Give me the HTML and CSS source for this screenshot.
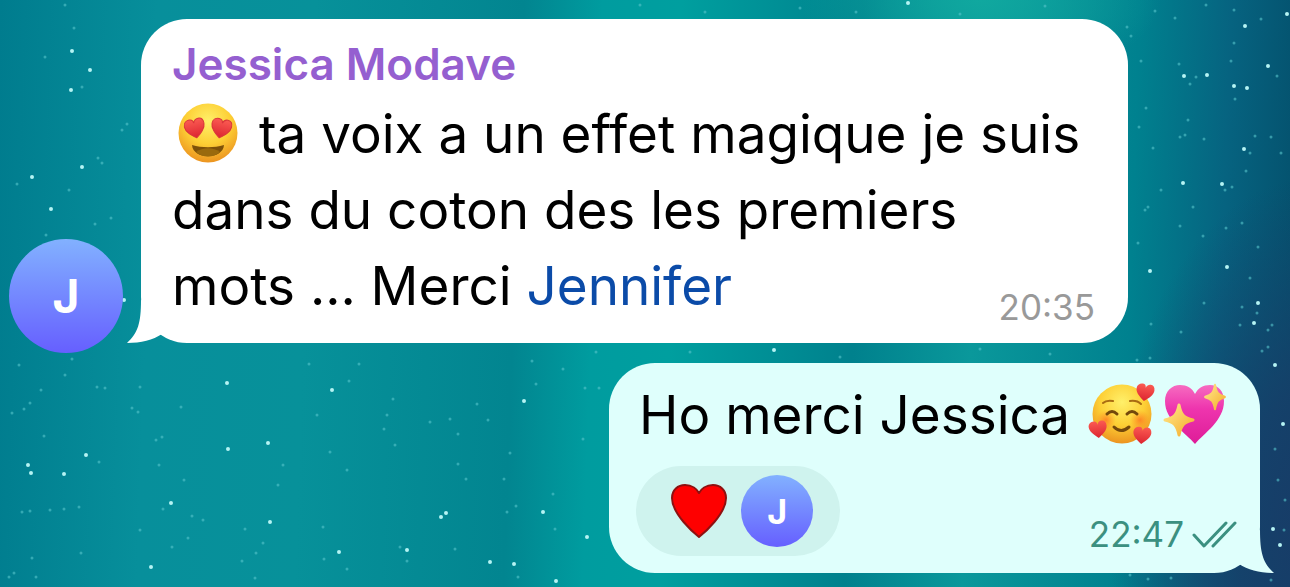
FILE: index.html
```
<!DOCTYPE html>
<html lang="fr">

<head>
    <meta charset="UTF-8">
    <meta name="viewport" content="width=device-width, initial-scale=1.0">
    <title>Conversation</title>
    <link rel="stylesheet" href="styles.css">
</head>

<body>
    <!-- ciel étoilé -->
    <svg class="stars" viewBox="0 0 1290 587" preserveAspectRatio="xMidYMid slice" aria-hidden="true">
        <path class="stars-bright" d="M72 51h0M90 70h0M71 90h0M32 177h0M82 167h0M51 209h0M124 300h0M28 465h0M31 473h0M64 474h0M86 455h0M268 443h0M228 449h0M270 522h0M227 383h0M171 503h0M151 567h0M524 401h0M446 513h0M441 517h0M543 512h0M490 562h0M514 564h0M556 581h0M332 390h0M339 552h0M407 550h0M587 537h0M1184 76h0M1268 66h0M1247 88h0M1234 86h0M1245 26h0M1287 14h0M1183 183h0M1244 149h0M1222 184h0M1150 271h0M1227 267h0M1258 303h0M1254 323h0M1275 365h0M1207 75h0M908 3h0M774 350h0M1283 424h0M1273 529h0M1280 545h0"/>
        <path class="stars-faint" d="M65 5h0M74 28h0M45 57h0M82 87h0M127 124h0M122 130h0M98 158h0M102 163h0M17 184h0M69 190h0M111 218h0M95 224h0M46 235h0M19 365h0M72 359h0M65 375h0M41 390h0M30 403h0M24 409h0M12 413h0M44 436h0M97 387h0M105 388h0M140 387h0M132 408h0M138 412h0M181 407h0M162 437h0M156 440h0M159 465h0M184 480h0M99 462h0M22 512h0M30 511h0M50 510h0M64 509h0M79 507h0M163 509h0M203 520h0M192 516h0M140 530h0M172 547h0M188 538h0M81 553h0M32 558h0M14 573h0M9 577h0M36 577h0M278 485h0M283 465h0M245 529h0M263 543h0M256 553h0M242 561h0M255 578h0M309 364h0M359 364h0M349 381h0M393 399h0M387 415h0M384 429h0M395 445h0M317 415h0M330 452h0M347 470h0M430 422h0M450 419h0M458 434h0M477 404h0M488 420h0M458 464h0M466 479h0M510 453h0M504 479h0M532 361h0M563 369h0M536 384h0M585 388h0M599 388h0M583 439h0M596 352h0M553 494h0M555 529h0M516 506h0M507 512h0M323 527h0M324 559h0M347 569h0M400 547h0M407 561h0M455 549h0M518 577h0M1131 36h0M1127 27h0M1155 11h0M1175 18h0M1206 5h0M1234 10h0M1261 19h0M1234 43h0M1141 61h0M1179 64h0M1231 61h0M1196 77h0M1277 76h0M1235 99h0M1190 84h0M1146 108h0M1188 120h0M1204 139h0M1185 135h0M1180 137h0M1139 127h0M1153 148h0M1255 136h0M1271 137h0M1250 153h0M1246 171h0M1281 153h0M1232 187h0M1225 190h0M1161 190h0M1193 207h0M1145 210h0M1148 207h0M1180 226h0M1226 228h0M1242 223h0M1203 236h0M1138 243h0M1258 247h0M1250 278h0M1204 303h0M1242 307h0M1257 313h0M1240 325h0M1268 330h0M1272 325h0M1268 347h0M1262 351h0M1151 324h0M1181 332h0M1150 358h0M1137 360h0M640 5h0M705 12h0M800 8h0M856 12h0M960 14h0M1045 6h0M690 352h0M840 357h0M980 349h0M1050 354h0M1275 449h0M1278 480h0M1285 500h0M1284 530h0M1271 580h0M1130 575h0M1148 579h0M1171 578h0"/>
    </svg>

    <main class="chat">
        <article class="message incoming">
            <span class="avatar">J</span>
            <div class="bubble">
                <svg class="tail" viewBox="0 0 60 60" aria-hidden="true">
                    <path d="M14 17C14 40 11 50 0 60C14 60 26 57 35 51L50 30Z"/>
                </svg>
                <h2 class="sender">Jessica Modave</h2>
                <div class="body">
                    <p class="text"><svg class="emoji" viewBox="0 0 60 60" role="img" aria-label="Yeux en cœur">
                            <defs>
                                <radialGradient id="face" cx="50%" cy="30%" r="70%">
                                    <stop offset="0" stop-color="#fff06a"/>
                                    <stop offset="0.55" stop-color="#fdcf35"/>
                                    <stop offset="1" stop-color="#ec9420"/>
                                </radialGradient>
                                <linearGradient id="redHeart" x1="0" y1="0" x2="0" y2="1">
                                    <stop offset="0" stop-color="#fb5b52"/>
                                    <stop offset="1" stop-color="#dc2430"/>
                                </linearGradient>
                                <path id="heart" d="M0 9C-5 5-10 1-10-4C-10-8-7-10-4-10C-2-10 0-9 0-6C1-9 3-10 5-10C8-10 10-8 10-4C10 1 5 5 0 9Z"/>
                            </defs>
                            <circle cx="30" cy="30" r="29.500" fill="url(#face)"/>
                            <use href="#heart" transform="translate(17 26) rotate(-12)" fill="url(#redHeart)" stroke="#d9363a"/>
                            <use href="#heart" transform="translate(43 26) rotate(12)" fill="url(#redHeart)" stroke="#d9363a"/>
                            <path d="M14 42C24 45 36 45 46 42C45 57 15 57 14 42Z" fill="#7d5109"/>
                            <path d="M18 49C25 44 35 44 42 49C35 55 25 55 18 49Z" fill="#9a6a0d"/>
                        </svg> ta voix a un effet magique je suis dans du coton des les premiers mots ... Merci <a class="mention" href="#jennifer">Jennifer</a></p>
                    <div class="meta"><time datetime="20:35">20:35</time></div>
                </div>
            </div>
        </article>

        <article class="message outgoing">
            <div class="bubble">
                <svg class="tail" viewBox="0 0 60 60" aria-hidden="true">
                    <path d="M14 17C14 40 11 50 0 60C14 60 26 57 35 51L50 30Z"/>
                </svg>
                <p class="text">Ho merci Jessica <span class="emojis"><svg class="emoji" viewBox="0 0 60 60" role="img" aria-label="Visage souriant avec des cœurs">
                        <defs>
                            <radialGradient id="cheek">
                                <stop offset="0" stop-color="#ff6a20" stop-opacity="0.7"/>
                                <stop offset="1" stop-color="#ff8a20" stop-opacity="0"/>
                            </radialGradient>
                        </defs>
                        <circle cx="30" cy="30" r="29.500" fill="url(#face)"/>
                        <circle cx="14" cy="36" r="10" fill="url(#cheek)"/>
                        <circle cx="48" cy="36" r="10" fill="url(#cheek)"/>
                        <path d="M11 19Q14 16 21 17M38 17Q45 16 49 20" fill="none" stroke="#a96c12" stroke-width="2" stroke-linecap="round"/>
                        <path d="M15 30Q20 25 25 30M35 30Q40 25 45 30M22 43Q29 50 37 43" fill="none" stroke="#74480b" stroke-width="3" stroke-linecap="round"/>
                        <use href="#heart" transform="translate(53 9) rotate(8) scale(0.9)" fill="url(#redHeart)"/>
                        <use href="#heart" transform="translate(6 46) rotate(-6) scale(0.9)" fill="url(#redHeart)"/>
                        <use href="#heart" transform="translate(50 52) rotate(6) scale(0.9)" fill="url(#redHeart)"/>
                    </svg><svg class="emoji" viewBox="0 0 60 60" role="img" aria-label="Cœur étincelant">
                        <defs>
                            <linearGradient id="pinkHeart" x1="0" y1="0" x2="0" y2="1">
                                <stop offset="0" stop-color="#f66cc0"/>
                                <stop offset="0.4" stop-color="#ee35ae"/>
                                <stop offset="1" stop-color="#de1c98"/>
                            </linearGradient>
                            <linearGradient id="gold" x1="0" y1="0" x2="1" y2="1">
                                <stop offset="0" stop-color="#ffe98c"/>
                                <stop offset="1" stop-color="#f5ad2a"/>
                            </linearGradient>
                            <path id="spark" d="M0-15C2-5 5-2 14 0C5 2 2 5 0 15C-2 5-5 2-14 0C-5-2-2-5 0-15Z"/>
                        </defs>
                        <path d="M31 60C22 49 1 37 1 17C1 7 8 1 16 1C23 1 28 4 31 10C34 4 39 1 46 1C54 1 60 7 60 17C60 37 40 49 31 60Z" fill="url(#pinkHeart)"/>
                        <use href="#spark" transform="translate(15 36)" fill="url(#gold)" stroke="url(#gold)" stroke-width="3" stroke-linejoin="round"/>
                        <use href="#spark" transform="translate(51 13) scale(0.7 0.8)" fill="url(#gold)" stroke="url(#gold)" stroke-width="3" stroke-linejoin="round"/>
                    </svg></span></p>
                <div class="footer">
                    <button class="reaction" type="button" aria-label="Cœur, Jessica Modave">
                        <svg class="reaction-heart" viewBox="0 0 56 56" aria-hidden="true">
                            <path d="M28 54C23 50 1 31 1 15C1 7 7 2 14 2C21 2 26 6 28 10C30 6 35 2 42 2C49 2 55 7 55 15C55 31 33 50 28 54Z" fill="#fe0000" stroke="#8e1010" stroke-width="2" stroke-linejoin="round"/>
                        </svg>
                        <span class="avatar avatar-small">J</span>
                    </button>
                    <div class="meta">
                        <time datetime="22:47">22:47</time>
                        <svg class="checks" viewBox="0 0 45 27" role="img" aria-label="Lu">
                            <path d="M2 14L12 25L34 2M21 25L43 2"/>
                        </svg>
                    </div>
                </div>
            </div>
        </article>
    </main>
</body>

</html>
```
FILE: styles.css
```
* {
    box-sizing: border-box;
}

body {
    position: relative;
    min-height: 100vh;
    margin: 0;
    overflow-x: hidden;
    font-family: Inter, "Liberation Sans", sans-serif;
    color: #000;
    background:
        radial-gradient(ellipse 14% 14% at 76% 0%, #10a89f 0%, transparent 100%),
        radial-gradient(ellipse 16% 60% at 102% 90%, #183c68 0%, #183c68cc 40%, transparent 100%),
        linear-gradient(92deg, #007c8e 0%, #078f9b 12%, #07919a 24%, #028590 40%, #009c9f 46%, #009f9f 52%, #00818d 66%, #0a989b 75%, #00818f 87%, #066380 94%, #04506c 100%);
}

.stars {
    position: absolute;
    inset: 0;
    width: 100%;
    height: 100%;
    fill: none;
    stroke-linecap: round;
}

.stars-bright {
    stroke: #b5f4f4;
    stroke-width: 4;
}

.stars-faint {
    stroke: #57c4cb;
    stroke-width: 3;
    opacity: 0.6;
}

h2,
p {
    margin: 0;
}

.chat {
    position: relative;
    display: flex;
    flex-direction: column;
    gap: 20px;
    padding: 19px 30px 14px 9px;
}

.message {
    display: flex;
    align-items: flex-end;
    gap: 18px;
}

.outgoing {
    justify-content: flex-end;
}

.bubble {
    position: relative;
    max-width: 987px;
    border-radius: 46px;
}

.incoming .bubble {
    padding: 19px 33px 19px 31px;
    background-color: #fff;
}

.outgoing .bubble {
    padding: 14px 23px 17px 27px;
    background-color: #dffffc;
}

/* pointe de la bulle */
.tail {
    position: absolute;
    bottom: 0;
    left: -14px;
    width: 60px;
    height: 60px;
    fill: #fff;
}

.outgoing .tail {
    right: -14px;
    left: auto;
    fill: #dffffc;
    transform: scaleX(-1);
}

.avatar {
    display: flex;
    flex: none;
    align-items: center;
    justify-content: center;
    width: 114px;
    height: 114px;
    margin-bottom: -10px;
    border-radius: 50%;
    background-image: linear-gradient(#82b1ff, #665fff);
    color: #fff;
    font-size: 46px;
    font-weight: 700;
}

.avatar-small {
    width: 72px;
    height: 72px;
    margin-bottom: 0;
    font-size: 34px;
}

.sender {
    margin-bottom: 6px;
    color: #955fd0;
    font-size: 44px;
    font-weight: 600;
    line-height: 52px;
}

.body {
    display: grid;
}

.body > * {
    grid-area: 1 / 1;
}

.text {
    font-size: 53px;
    line-height: 76px;
}

.outgoing .text {
    padding: 0 13px 0 3px;
}

.emoji {
    width: 60px;
    height: 60px;
    margin: 0 6px;
    overflow: visible;
    vertical-align: -10px;
}

.emojis {
    display: inline-flex;
    gap: 12px;
    margin-left: 7px;
    vertical-align: -10px;
}

.emojis .emoji {
    margin: 0;
}

.mention {
    color: #0b4ba8;
    text-decoration: none;
}

.meta {
    display: flex;
    align-items: center;
    align-self: end;
    justify-self: end;
    gap: 8px;
    color: #999;
    font-size: 35px;
    line-height: 34px;
}

.outgoing .meta {
    margin-bottom: 5px;
    color: #3b9080;
}

.checks {
    width: 45px;
    height: 27px;
    fill: none;
    stroke: currentColor;
    stroke-width: 3;
    stroke-linecap: round;
    stroke-linejoin: round;
}

.footer {
    display: flex;
    justify-content: space-between;
    margin-top: 13px;
}

.reaction {
    display: flex;
    align-items: center;
    gap: 14px;
    height: 90px;
    padding: 0 27px 0 35px;
    border: none;
    border-radius: 45px;
    background-color: #cff3ee;
    font-family: inherit;
    cursor: pointer;
}

.reaction-heart {
    width: 56px;
    height: 56px;
}
```
